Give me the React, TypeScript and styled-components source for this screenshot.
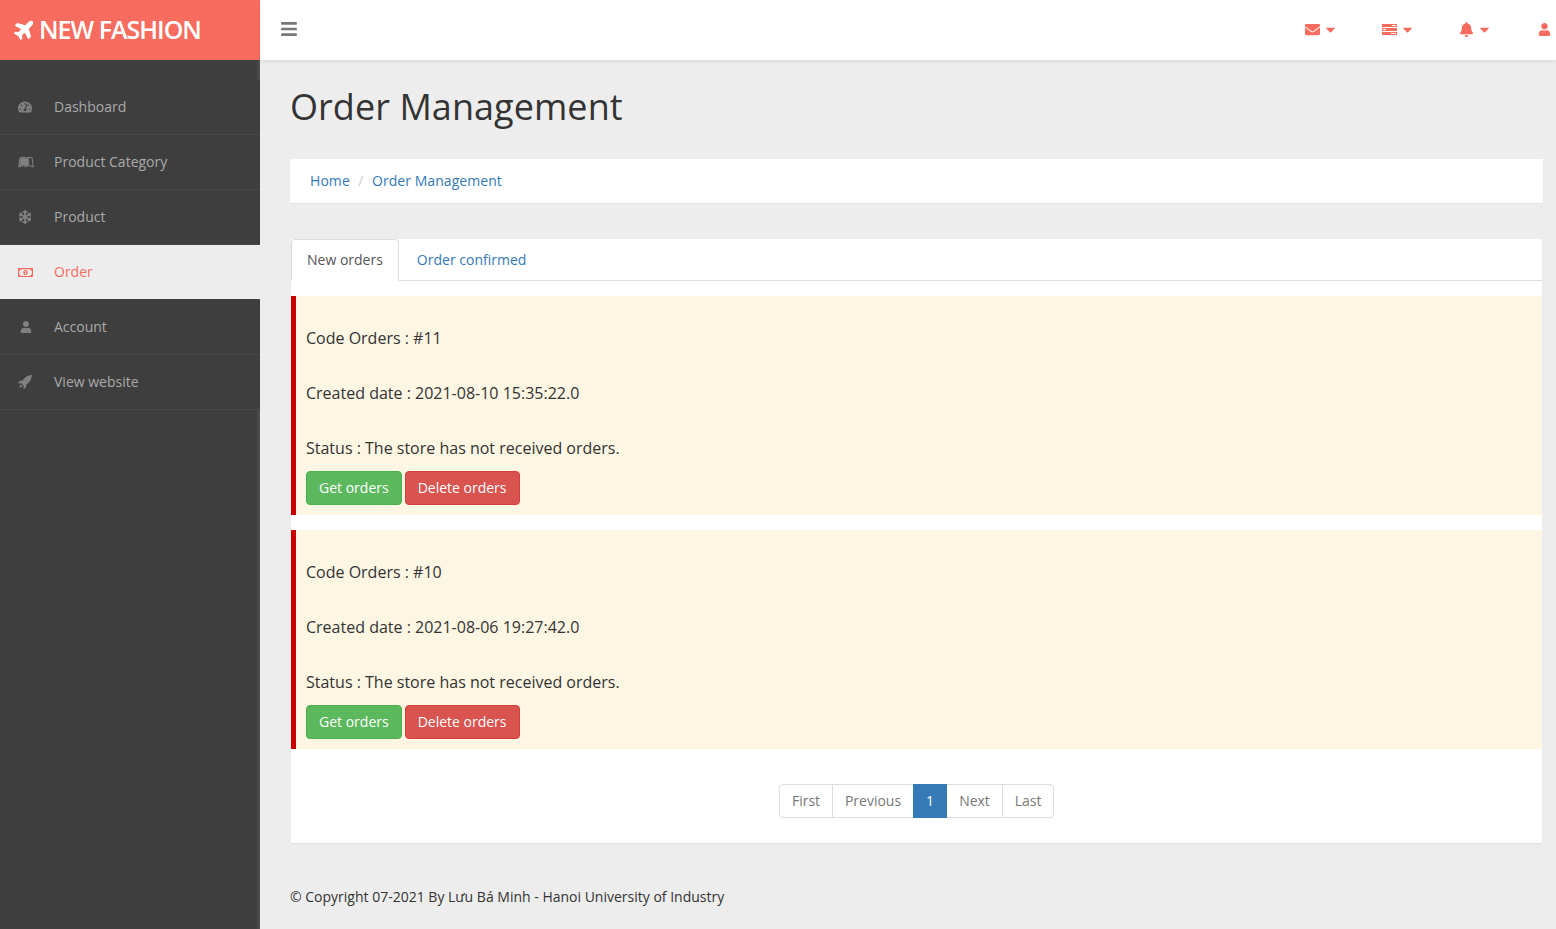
import React, { ReactElement } from 'react';
import styled, { createGlobalStyle } from 'styled-components';
import {
  FaBars,
  FaBell,
  FaCaretDown,
  FaEnvelope,
  FaLeanpub,
  FaPlane,
  FaRegMoneyBillAlt,
  FaSnowflake,
  FaTachometerAlt,
  FaUser,
} from 'react-icons/fa';

const GlobalStyle = createGlobalStyle`
  html, body {
    margin: 0;
    padding: 0;
    height: 100%;
    overflow: hidden;
  }
  body {
    font-family: "Open Sans", "Liberation Sans", sans-serif;
    font-size: 14px;
    line-height: 20px;
    color: #333;
    background: #ededed;
  }
  * {
    box-sizing: border-box;
  }
`;

const Page = styled.div`
  display: flex;
  width: 1556px;
  height: 929px;
  overflow: hidden;
`;

const Sidebar = styled.aside`
  width: 260px;
  flex-shrink: 0;
  display: flex;
  flex-direction: column;
  background: #3e3e3e;
  box-shadow: inset -3px 0 3px -1px rgba(255, 255, 255, 0.1);
`;

const Brand = styled.div`
  height: 60px;
  background: #f76c5e;
  color: #fff;
  display: flex;
  align-items: center;
  padding: 0 0 2px 14px;
  gap: 3px;
  font-size: 25px;
  font-weight: 600;
  letter-spacing: -1px;
  svg {
    font-size: 22px;
    transform: rotate(-45deg);
  }
`;

const Nav = styled.ul`
  list-style: none;
  margin: 20px 0 0;
  padding: 0;
`;

const NavItem = styled.li<{ $active?: boolean }>`
  height: ${(props) => (props.$active ? 54 : 55)}px;
  margin-bottom: ${(props) => (props.$active ? 1 : 0)}px;
  display: flex;
  align-items: center;
  background: ${(props) => (props.$active ? '#ededed' : '#3e3e3e')};
  color: ${(props) => (props.$active ? '#f76c5e' : '#aaa')};
  border-bottom: ${(props) => (props.$active ? 'none' : '1px solid #484848')};
  padding-left: 18px;
`;

const NavIcon = styled.span<{ $active?: boolean }>`
  width: 36px;
  display: flex;
  align-items: center;
  color: ${(props) => (props.$active ? '#f76c5e' : '#808080')};
  font-size: 14px;
`;

const Main = styled.div`
  flex: 1;
  min-width: 0;
  display: flex;
  flex-direction: column;
`;

const Topbar = styled.header`
  height: 60px;
  flex-shrink: 0;
  background: #fff;
  box-shadow: 0 2px 4px rgba(0, 0, 0, 0.08);
  display: flex;
  align-items: center;
  justify-content: space-between;
  padding: 0 0 2px 20px;
  color: #f76c5e;
`;

const MenuButton = styled.span`
  color: #777;
  font-size: 18px;
  display: flex;
`;

const TopIcons = styled.div`
  display: flex;
  align-items: center;
  padding-top: 1px;
`;

const TopIcon = styled.span<{ $last?: boolean }>`
  display: flex;
  align-items: center;
  justify-content: flex-start;
  width: ${(props) => (props.$last ? 20 : 77)}px;
  padding-left: ${(props) => (props.$last ? 2 : 0)}px;
  gap: 2.5px;
  font-size: 15px;
`;

const Content = styled.main`
  padding: 0 13px 0 30px;
  flex: 1;
`;

const Title = styled.h1`
  margin: 23px 0 29px;
  font-size: 36px;
  line-height: 47px;
  font-weight: 400;
  letter-spacing: 0.06px;
  color: #333;
`;

const Breadcrumb = styled.div`
  height: 45px;
  background: #fff;
  border-bottom: 1px solid #e4e4e4;
  display: flex;
  align-items: center;
  padding-left: 20px;
  gap: 8.5px;
  color: #ccc;
`;

const Crumb = styled.a`
  color: #337ab7;
  letter-spacing: 0.06px;
`;

const Panel = styled.section`
  margin: 35px 1px 0;
  background: #fff;
  box-shadow: 0 1px 1px rgba(0, 0, 0, 0.05);
  height: 604px;
  display: flex;
  flex-direction: column;
`;

const Tabs = styled.div`
  display: flex;
  height: 42px;
  border-bottom: 1px solid #ddd;
  margin-bottom: 15px;
  flex-shrink: 0;
`;

const Tab = styled.a<{ $active?: boolean }>`
  height: 42px;
  padding: 10px 15px;
  color: ${(props) => (props.$active ? '#555' : '#337ab7')};
  background: ${(props) => (props.$active ? '#fff' : 'transparent')};
  border: 1px solid ${(props) => (props.$active ? '#ddd' : 'transparent')};
  border-bottom-color: ${(props) => (props.$active ? '#fff' : 'transparent')};
  border-radius: 4px 4px 0 0;
  margin-right: 2px;
`;

const OrderCard = styled.article`
  height: 219px;
  margin-bottom: 15px;
  background: #fdf6e3;
  border-left: 5px solid #c80000;
  padding: 14px 10px 0;
  flex-shrink: 0;
`;

const OrderLine = styled.p`
  margin: 0;
  height: 55px;
  display: flex;
  align-items: center;
  font-size: 16px;
  color: #333;
`;

const Actions = styled.div`
  display: flex;
  gap: 3px;
  margin-top: -4px;
`;

const ActionButton = styled.button<{ $bg: string; $border: string }>`
  height: 34px;
  padding: 6px 12px;
  font: inherit;
  font-size: 14px;
  color: #fff;
  background: ${(props) => props.$bg};
  border: 1px solid ${(props) => props.$border};
  border-radius: 4px;
`;

const PagerRow = styled.nav`
  display: flex;
  justify-content: center;
  margin-top: 20px;
`;

const PageLink = styled.a<{ $active?: boolean; $width: number }>`
  width: ${(props) => props.$width}px;
  height: 34px;
  padding: 6px 0;
  margin-left: -1px;
  text-align: center;
  z-index: ${(props) => (props.$active ? 1 : 0)};
  color: ${(props) => (props.$active ? '#fff' : '#777')};
  background: ${(props) => (props.$active ? '#337ab7' : '#fff')};
  border: 1px solid ${(props) => (props.$active ? '#337ab7' : '#ddd')};
  &:first-child {
    margin-left: 0;
    border-radius: 4px 0 0 4px;
  }
  &:last-child {
    border-radius: 0 4px 4px 0;
  }
`;

const Footer = styled.footer`
  margin-top: 44px;
  color: #333;
`;

// fa-tasks from the old icon set, the newer one in the package is a checklist
const TasksIcon = (): ReactElement => (
  <svg width="15" height="11" viewBox="0 0 15 11" fill="currentColor">
    <path d="M0 0h15v3H0zM0 4h15v3H0zM0 8h15v3H0z" />
    <path d="M10 1h4v1h-4zM1 5h3v1H1zM9 9h5v1H9z" fill="#fff" />
  </svg>
);

const RocketIcon = (): ReactElement => (
  <svg width="14" height="14" viewBox="0 0 14 14" fill="currentColor">
    <path d="M14 0C9.500.3 6.500 2.500 4.500 5.500L1.500 6 0 8.500l3-.2L5.700 11l-.2 3L8 12.500l.5-3C11.500 7.500 13.700 4.500 14 0z" />
    <path d="M2.600 9.300l2.100 2.100L1 13z" />
  </svg>
);

const SmallUser = styled(FaUser)`
  font-size: 12px;
  margin-left: 2px;
`;

const navItems = [
  { label: 'Dashboard', icon: <FaTachometerAlt /> },
  { label: 'Product Category', icon: <FaLeanpub size={16} /> },
  { label: 'Product', icon: <FaSnowflake /> },
  { label: 'Order', icon: <FaRegMoneyBillAlt size={15} />, active: true },
  { label: 'Account', icon: <SmallUser /> },
  { label: 'View website', icon: <RocketIcon /> },
];

const orders = [
  { code: '#11', created: '2021-08-10 15:35:22.0' },
  { code: '#10', created: '2021-08-06 19:27:42.0' },
];

const pages = [
  { label: 'First', width: 54 },
  { label: 'Previous', width: 82 },
  { label: '1', width: 34, active: true },
  { label: 'Next', width: 57 },
  { label: 'Last', width: 52 },
];

const App = (): ReactElement => (
  <Page>
    <GlobalStyle />
    <Sidebar>
      <Brand>
        <FaPlane />
        NEW FASHION
      </Brand>
      <Nav>
        {navItems.map((item) => (
          <NavItem key={item.label} $active={item.active}>
            <NavIcon $active={item.active}>{item.icon}</NavIcon>
            {item.label}
          </NavItem>
        ))}
      </Nav>
    </Sidebar>
    <Main>
      <Topbar>
        <MenuButton>
          <FaBars />
        </MenuButton>
        <TopIcons>
          <TopIcon>
            <FaEnvelope />
            <FaCaretDown size={15} />
          </TopIcon>
          <TopIcon>
            <TasksIcon />
            <FaCaretDown size={15} />
          </TopIcon>
          <TopIcon>
            <FaBell />
            <FaCaretDown size={15} />
          </TopIcon>
          <TopIcon $last>
            <FaUser size={13} />
          </TopIcon>
        </TopIcons>
      </Topbar>
      <Content>
        <Title>Order Management</Title>
        <Breadcrumb>
          <Crumb>Home</Crumb>/<Crumb>Order Management</Crumb>
        </Breadcrumb>
        <Panel>
          <Tabs>
            <Tab $active>New orders</Tab>
            <Tab>Order confirmed</Tab>
          </Tabs>
          {orders.map((order) => (
            <OrderCard key={order.code}>
              <OrderLine>Code Orders : {order.code}</OrderLine>
              <OrderLine>Created date : {order.created}</OrderLine>
              <OrderLine>Status : The store has not received orders.</OrderLine>
              <Actions>
                <ActionButton $bg="#5cb85c" $border="#4cae4c">Get orders</ActionButton>
                <ActionButton $bg="#d9534f" $border="#d43f3a">Delete orders</ActionButton>
              </Actions>
            </OrderCard>
          ))}
          <PagerRow>
            {pages.map((page) => (
              <PageLink key={page.label} $active={page.active} $width={page.width}>
                {page.label}
              </PageLink>
            ))}
          </PagerRow>
        </Panel>
        <Footer>© Copyright 07-2021 By Lưu Bá Minh - Hanoi University of Industry</Footer>
      </Content>
    </Main>
  </Page>
);

export default App;
